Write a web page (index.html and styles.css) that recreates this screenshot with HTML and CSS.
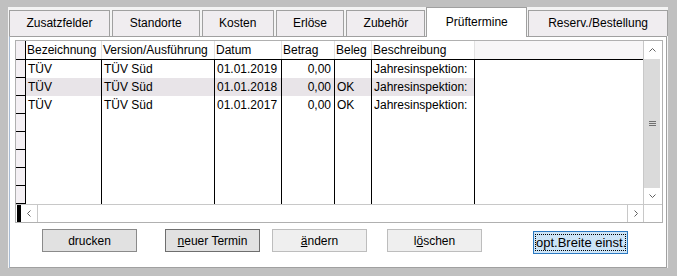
FILE: index.html
```html
<!DOCTYPE html>
<html lang="de">
<head>
    <meta charset="UTF-8">
    <title>Prüftermine</title>
    <link rel="stylesheet" href="styles.css">
</head>
<body>
    <div class="window">
        <div class="tabs">
            <div class="tab t-zusatz">Zusatzfelder</div>
            <div class="tab t-standorte">Standorte</div>
            <div class="tab t-kosten">Kosten</div>
            <div class="tab t-erloese">Erlöse</div>
            <div class="tab t-zubehoer">Zubehör</div>
            <div class="tab active t-pruef">Prüftermine</div>
            <div class="tab t-reserv">Reserv./Bestellung</div>
        </div>
        <div class="page">
            <div class="grid">
                <div class="table">
                    <div class="row head">
                        <div class="cell ind"></div>
                        <div class="cell">Bezeichnung</div>
                        <div class="cell">Version/Ausführung</div>
                        <div class="cell">Datum</div>
                        <div class="cell">Betrag</div>
                        <div class="cell">Beleg</div>
                        <div class="cell">Beschreibung</div>
                        <div class="cell tail"></div>
                    </div>
                    <div class="row">
                        <div class="cell ind"></div>
                        <div class="cell">TÜV</div>
                        <div class="cell">TÜV Süd</div>
                        <div class="cell">01.01.2019</div>
                        <div class="cell num">0,00</div>
                        <div class="cell"></div>
                        <div class="cell">Jahresinspektion:</div>
                        <div class="cell tail"></div>
                    </div>
                    <div class="row selected">
                        <div class="cell ind"></div>
                        <div class="cell">TÜV</div>
                        <div class="cell">TÜV Süd</div>
                        <div class="cell">01.01.2018</div>
                        <div class="cell num">0,00</div>
                        <div class="cell">OK</div>
                        <div class="cell">Jahresinspektion:</div>
                        <div class="cell tail"></div>
                    </div>
                    <div class="row">
                        <div class="cell ind"></div>
                        <div class="cell">TÜV</div>
                        <div class="cell">TÜV Süd</div>
                        <div class="cell">01.01.2017</div>
                        <div class="cell num">0,00</div>
                        <div class="cell">OK</div>
                        <div class="cell">Jahresinspektion:</div>
                        <div class="cell tail"></div>
                    </div>
                    <div class="row"><div class="cell ind"></div><div class="cell"></div><div class="cell"></div><div class="cell"></div><div class="cell"></div><div class="cell"></div><div class="cell"></div><div class="cell tail"></div></div>
                    <div class="row"><div class="cell ind"></div><div class="cell"></div><div class="cell"></div><div class="cell"></div><div class="cell"></div><div class="cell"></div><div class="cell"></div><div class="cell tail"></div></div>
                    <div class="row"><div class="cell ind"></div><div class="cell"></div><div class="cell"></div><div class="cell"></div><div class="cell"></div><div class="cell"></div><div class="cell"></div><div class="cell tail"></div></div>
                    <div class="row"><div class="cell ind"></div><div class="cell"></div><div class="cell"></div><div class="cell"></div><div class="cell"></div><div class="cell"></div><div class="cell"></div><div class="cell tail"></div></div>
                    <div class="row"><div class="cell ind"></div><div class="cell"></div><div class="cell"></div><div class="cell"></div><div class="cell"></div><div class="cell"></div><div class="cell"></div><div class="cell tail"></div></div>
                </div>
                <div class="vscroll">
                    <div class="arrow up">
                        <svg width="7" height="4" viewBox="0 0 7 4"><polyline points="0.5,3.5 3.5,0.5 6.5,3.5" fill="none" stroke="#606060" stroke-width="1"/></svg>
                    </div>
                    <div class="thumb">
                        <svg width="7" height="6" viewBox="0 0 7 6"><path d="M0 0.5H7M0 2.5H7M0 4.5H7" stroke="#707070" stroke-width="1"/></svg>
                    </div>
                    <div class="arrow down">
                        <svg width="7" height="4" viewBox="0 0 7 4"><polyline points="0.5,0.5 3.5,3.5 6.5,0.5" fill="none" stroke="#606060" stroke-width="1"/></svg>
                    </div>
                    <div class="corner"></div>
                </div>
                <div class="hscroll">
                    <div class="marker"></div>
                    <div class="harrow left">
                        <svg width="4" height="7" viewBox="0 0 4 7"><polyline points="3.5,0.5 0.5,3.5 3.5,6.5" fill="none" stroke="#606060" stroke-width="1"/></svg>
                    </div>
                    <div class="track"></div>
                    <div class="harrow right">
                        <svg width="4" height="7" viewBox="0 0 4 7"><polyline points="0.5,0.5 3.5,3.5 0.5,6.5" fill="none" stroke="#606060" stroke-width="1"/></svg>
                    </div>
                </div>
            </div>
            <div class="buttons">
                <button class="btn b-drucken">drucken</button>
                <button class="btn b-neu"><u>n</u>euer Termin</button>
                <button class="btn light b-aendern"><u>ä</u>ndern</button>
                <button class="btn light b-loeschen">l<u>ö</u>schen</button>
                <button class="btn focus b-breite"><span>opt.Breite einst.</span></button>
            </div>
        </div>
    </div>
</body>
</html>
```

FILE: styles.css
```css
body {
    margin: 0;
    background-color: #c0c0c0;
    font-family: "Liberation Sans", Arial, sans-serif;
    font-size: 12px;
    color: #000;
}
.window {
    margin: 7px 0 0 8px;
    width: 659px;
    height: 261px;
    padding-left: 1px;
    background-color: #f4f4f4;
    display: flex;
    flex-direction: column;
}

/* reiter */
.tabs {
    display: flex;
    height: 29px;
    align-items: flex-end;
}
.tab {
    box-sizing: border-box;
    height: 26px;
    line-height: 25px;
    text-align: center;
    border: 1px solid #a0a0a0;
    border-bottom: none;
    background-color: #f0edf0;
    margin-right: 2px;
}
.tab.active {
    height: 30px;
    line-height: 28px;
    background-color: #fff;
    margin-bottom: -1px;
    position: relative;
    z-index: 1;
}
.t-zusatz { width: 101px; }
.t-standorte { width: 88px; }
.t-kosten { width: 72px; }
.t-erloese { width: 69px; }
.t-zubehoer { width: 79px; margin-right: 1px; }
.t-pruef { width: 101px; margin-right: 1px; }
.t-reserv { width: 140px; margin-right: 0; }

.page {
    box-sizing: border-box;
    width: 658px;
    height: 232px;
    background-color: #fff;
    border-top: 1px solid #a0a0a0;
    border-left: 1px solid #a9bcd3;
    border-right: 1px solid #a0a0a0;
    border-bottom: 1px solid #a0a0a0;
}

/* tabelle */
.grid {
    box-sizing: border-box;
    margin: 3px 0 0 5px;
    width: 648px;
    height: 183px;
    border: 1px solid #b0b0b0;
    display: grid;
    grid-template-columns: 627px 19px;
    grid-template-rows: 163px 18px;
}
.table {
    overflow: hidden;
}
.row {
    display: grid;
    grid-template-columns: 10px 76px 113px 67px 53px 37px 103px 168px;
    height: 18px;
}
.cell {
    box-sizing: border-box;
    border-right: 1px solid #000;
    padding-left: 2px;
    line-height: 18px;
    white-space: nowrap;
    overflow: hidden;
}
.cell.ind {
    background-color: #f4f0f4;
    border-bottom: 1px solid #000;
    padding: 0;
}
.cell.tail {
    border-right: none;
}
.cell.num {
    text-align: right;
    padding: 0 3px 0 0;
}
.row.selected .cell {
    background-color: #e8e4e8;
}
.row.selected .cell.ind {
    background-color: #f4f0f4;
}
.row.selected .cell.tail {
    background-color: #fff;
}
.row.head {
    height: 19px;
    border-bottom: 1px solid #000;
    box-sizing: border-box;
}
.row.head .cell {
    border-right-color: #e2e2e2;
    padding-left: 1px;
}
.row.head .cell.ind {
    border-right-color: #000;
    border-bottom: none;
}
.row.head .cell.tail {
    background-color: #f7f6f7;
}

/* scrollbalken */
.vscroll {
    grid-row: 1 / 3;
    grid-column: 2;
    border-left: 1px solid #c8c8c8;
    padding-right: 2px;
    display: flex;
    flex-direction: column;
}
.arrow {
    height: 18px;
    display: flex;
    align-items: center;
    justify-content: center;
}
.arrow.down {
    height: 16px;
}
.thumb {
    flex: 1;
    background-color: #dadada;
    display: flex;
    align-items: center;
    justify-content: center;
}
.corner {
    height: 17px;
    border-top: 1px solid #c8c8c8;
    margin-right: -2px;
}
.hscroll {
    border-top: 1px solid #c8c8c8;
    display: flex;
}
.marker {
    width: 4px;
    margin-left: 1px;
    background-color: #000;
}
.harrow {
    width: 16px;
    display: flex;
    align-items: center;
    justify-content: center;
}
.harrow.left {
    border-right: 1px solid #c8c8c8;
}
.harrow.right {
    width: 15px;
    border-left: 1px solid #c8c8c8;
}
.track {
    flex: 1;
}

/* knoepfe */
.buttons {
    display: flex;
    align-items: flex-start;
    margin-top: 6px;
}
.btn {
    box-sizing: border-box;
    width: 95px;
    height: 23px;
    padding: 0;
    font-family: "Liberation Sans", Arial, sans-serif;
    font-size: 12px;
    color: #000;
    background-color: #e1e1e1;
    border: 1px solid #8a8a8a;
    white-space: nowrap;
}
.btn.light {
    background-color: #efefef;
    border-color: #bdbdbd;
}
.btn.focus {
    background-color: #cce4f7;
    border-color: #2b79c2;
    padding: 2px 1px;
    font-size: 13px;
    margin-top: 2px;
}
.btn.focus span {
    display: block;
    height: 100%;
    line-height: 16px;
    border: 1px dotted #000;
    box-sizing: border-box;
    overflow: visible;
}
.b-drucken { margin-left: 32px; }
.b-neu { margin-left: 28px; border-color: #6e6e6e; }
.b-aendern { margin-left: 12px; }
.b-loeschen { margin-left: 20px; }
.b-breite { margin-left: 51px; }
```
